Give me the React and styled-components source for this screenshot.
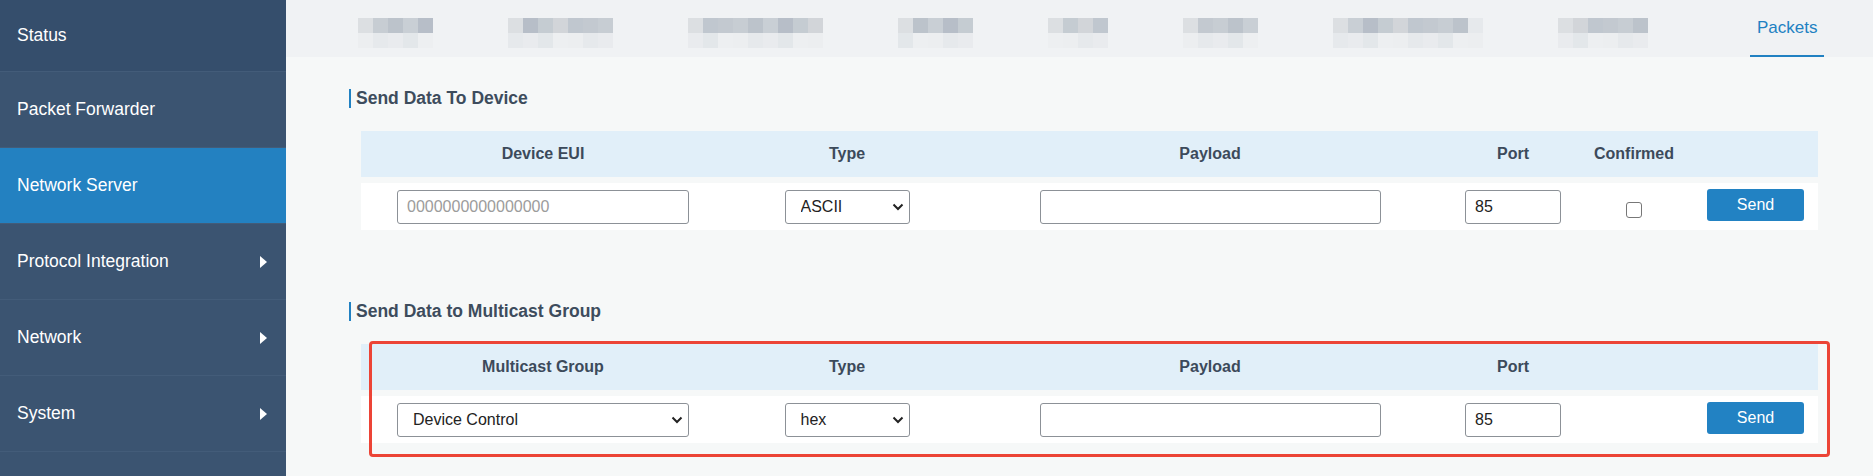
import React from 'react'
import styled, { createGlobalStyle } from 'styled-components'

const GlobalStyle = createGlobalStyle`
  html, body {
    margin: 0;
    padding: 0;
    background: #f6f8f8;
    font-family: "Liberation Sans", Arial, sans-serif;
    overflow: hidden;
  }
  * { box-sizing: border-box; }
`

const menu = [
  { label: 'Status', dark: true, first: true },
  { label: 'Packet Forwarder' },
  { label: 'Network Server', active: true },
  { label: 'Protocol Integration', arrow: true },
  { label: 'Network', arrow: true },
  { label: 'System', arrow: true },
  { label: '' },
]

// redacted tab labels: mosaic width and the room the tab takes
const hiddenTabs = [
  { w: 75, box: 75 },
  { w: 105, box: 105 },
  { w: 135, box: 135 },
  { w: 75, box: 75 },
  { w: 60, box: 60 },
  { w: 75, box: 75 },
  { w: 150, box: 150, fade: true },
  { w: 90, box: 124 },
]
const shades = ['#c3c9d0', '#c7cdd3', '#bcc3cb', '#c9cfd5', '#b7bec8', '#c5ccd2', '#d2d5d9', '#c0c7cf']
const lows = ['#eceef0', '#e6e9ec', '#e9ebee', '#e3e7ea', '#edeff1']

const cols = '364px 244px 482px 124px 118px 125px'

function topShade(tab, i, j, n) {
  if (j === 0) return '#dcdfe2'
  if (tab.fade && j === n - 1) return '#e6e9ec'
  return shades[(i * 3 + j) % shades.length]
}

function App() {
  return (
    <>
      <GlobalStyle />
      <Page>
        <Sidebar>
          {menu.map((m, i) => (
            <MenuItem key={i} $active={m.active} $dark={m.dark} $first={m.first}>
              <span>{m.label}</span>
              {m.arrow && <Arrow />}
            </MenuItem>
          ))}
        </Sidebar>
        <Main>
          <TabBar>
            {hiddenTabs.map((t, i) => {
              const n = Math.ceil(t.w / 15)
              return (
                <Tab key={i} $box={t.box}>
                  <Mosaic $w={t.w}>
                    <MosaicRow>
                      {Array.from({ length: n }).map((_, j) => (
                        <Cell key={j} $c={topShade(t, i, j, n)} />
                      ))}
                    </MosaicRow>
                    <MosaicRow>
                      {Array.from({ length: n }).map((_, j) => (
                        <Cell key={j} $c={lows[(i + j) % lows.length]} />
                      ))}
                    </MosaicRow>
                  </Mosaic>
                </Tab>
              )
            })}
            <Tab $active>Packets</Tab>
          </TabBar>

          <Content>
            <Section>
              <Title>Send Data To Device</Title>
              <TableWrap>
                <HeadRow>
                  <div>Device EUI</div>
                  <div>Type</div>
                  <div>Payload</div>
                  <div>Port</div>
                  <div>Confirmed</div>
                  <div />
                </HeadRow>
                <BodyRow>
                  <TextInput $w={292} placeholder="0000000000000000" />
                  <Select w={125} value="ASCII" options={['ASCII', 'hex']} />
                  <TextInput $w={341} />
                  <TextInput $w={96} defaultValue="85" />
                  <Check type="checkbox" />
                  <SendButton>Send</SendButton>
                </BodyRow>
              </TableWrap>
            </Section>

            <Section $gap={72}>
              <Title>Send Data to Multicast Group</Title>
              <TableWrap>
                <HeadRow>
                  <div>Multicast Group</div>
                  <div>Type</div>
                  <div>Payload</div>
                  <div>Port</div>
                  <div />
                  <div />
                </HeadRow>
                <BodyRow>
                  <Select w={292} value="Device Control" options={['Device Control']} />
                  <Select w={125} value="hex" options={['ASCII', 'hex']} />
                  <TextInput $w={341} />
                  <TextInput $w={96} defaultValue="85" />
                  <div />
                  <SendButton>Send</SendButton>
                </BodyRow>
                <Highlight />
              </TableWrap>
            </Section>
          </Content>
        </Main>
      </Page>
    </>
  )
}

function Select({ w, value, options }) {
  return (
    <SelectBox $w={w}>
      <NativeSelect defaultValue={value}>
        {options.map((o) => (
          <option key={o}>{o}</option>
        ))}
      </NativeSelect>
      <Chevron viewBox="0 0 12 8" width="12" height="8">
        <path d="M1.5 1.5l4.5 4.5 4.5-4.5" fill="none" stroke="#222" strokeWidth="2" />
      </Chevron>
    </SelectBox>
  )
}

export default App

const Page = styled.div`
  display: flex;
  height: 476px;
`

const Sidebar = styled.nav`
  width: 286px;
  flex-shrink: 0;
  background: #3b5471;
  display: flex;
  flex-direction: column;
  overflow: hidden;
`

const MenuItem = styled.div`
  height: ${(p) => (p.$first ? '72px' : '76px')};
  flex-shrink: 0;
  display: flex;
  align-items: center;
  justify-content: space-between;
  padding: 0 19px 0 17px;
  font-size: 17.5px;
  color: #fff;
  border-bottom: 1px solid #435c79;
  background: ${(p) => (p.$active ? '#2381c1' : p.$dark ? '#354e6c' : '#3b5471')};
`

const Arrow = styled.span`
  width: 0;
  height: 0;
  border-left: 7px solid #fff;
  border-top: 6.5px solid transparent;
  border-bottom: 6.5px solid transparent;
`

const Main = styled.main`
  flex: 1;
  display: flex;
  flex-direction: column;
  background: #f6f8f8;
`

const TabBar = styled.div`
  height: 57px;
  background: #f0f2f4;
  display: flex;
  gap: 61px;
  padding-left: 65px;
`

const Tab = styled.div`
  height: 57px;
  padding: 0 7px;
  ${(p) => (p.$box ? `width: ${p.$box + 14}px;` : '')}
  font-size: 17px;
  line-height: 55px;
  color: #2181c2;
  border-bottom: 2px solid ${(p) => (p.$active ? '#2181c2' : 'transparent')};
`

const Mosaic = styled.div`
  width: ${(p) => p.$w}px;
  margin-top: 18px;
  overflow: hidden;
  display: flex;
  flex-direction: column;
`

const MosaicRow = styled.div`
  display: flex;
  height: 15px;
`

const Cell = styled.span`
  flex: 0 0 15px;
  height: 15px;
  background: ${(p) => p.$c};
`

const Content = styled.div`
  padding: 32px 55px 0 63px;
`

const Section = styled.section`
  margin-top: ${(p) => p.$gap || 0}px;
`

const Title = styled.h3`
  margin: 0 0 23px;
  height: 19px;
  line-height: 19px;
  border-left: 2px solid #2181c2;
  padding-left: 5px;
  font-size: 17.5px;
  font-weight: bold;
  color: #3d4c5d;
`

const TableWrap = styled.div`
  position: relative;
  margin-left: 12px;
`

const HeadRow = styled.div`
  display: grid;
  grid-template-columns: ${cols};
  height: 46px;
  align-items: center;
  justify-items: center;
  background: #e1eff9;
  font-size: 16px;
  font-weight: bold;
  color: #3c4a5b;
`

const BodyRow = styled.div`
  display: grid;
  grid-template-columns: ${cols};
  height: 47px;
  margin-top: 6px;
  align-items: center;
  justify-items: center;
  background: #fff;
`

const TextInput = styled.input`
  width: ${(p) => p.$w}px;
  height: 34px;
  border: 1px solid #8c9197;
  border-radius: 3px;
  padding: 0 9px;
  font-family: inherit;
  font-size: 16px;
  color: #222;
  background: #fff;
  outline: none;

  &::placeholder {
    color: #9c9c9c;
  }
`

const SelectBox = styled.div`
  position: relative;
  width: ${(p) => p.$w}px;
  height: 34px;
`

const NativeSelect = styled.select`
  appearance: none;
  width: 100%;
  height: 34px;
  border: 1px solid #8c9197;
  border-radius: 3px;
  padding: 0 28px 0 15px;
  font-family: inherit;
  font-size: 16px;
  color: #222;
  background: #fff;
  outline: none;
`

const Chevron = styled.svg`
  position: absolute;
  right: 6px;
  top: 13px;
  pointer-events: none;
`

const Check = styled.input`
  appearance: none;
  width: 16px;
  height: 16px;
  margin: 7px 0 0;
  border: 1.5px solid #777;
  border-radius: 3px;
  background: #fff;
`

const SendButton = styled.button`
  width: 97px;
  height: 32px;
  margin-top: -3px;
  border: none;
  border-radius: 3px;
  background: #2282c3;
  color: #fff;
  font-family: inherit;
  font-size: 16px;
  cursor: pointer;
`

const Highlight = styled.div`
  position: absolute;
  left: 8px;
  top: -3px;
  right: -12px;
  bottom: -14px;
  border: 3px solid #ec4436;
  border-radius: 4px;
  pointer-events: none;
`
